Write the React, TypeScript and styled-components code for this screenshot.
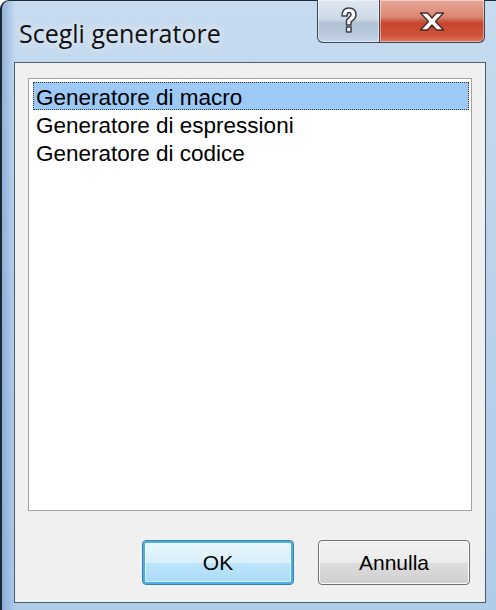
import React, { useState } from "react";
import styled, { createGlobalStyle } from "styled-components";

const GlobalStyle = createGlobalStyle`
  html, body {
    margin: 0;
    padding: 0;
    overflow: hidden;
  }
`;

const Window = styled.div`
  box-sizing: border-box;
  width: 496px;
  height: 610px;
  display: flex;
  flex-direction: column;
  padding: 0 10px 7px 12px;
  border-left: 2px solid #1e2834;
  border-top: 1px solid #1e2834;
  border-top-left-radius: 9px;
  background:
    linear-gradient(to right, rgba(110, 150, 205, 0.6) 0, rgba(120, 160, 210, 0) 13px),
    linear-gradient(to bottom, #c6dbef 0%, #bcd3eb 40%, #aecbea 100%);
`;

const TitleBar = styled.div`
  height: 61px;
  display: flex;
  align-items: flex-start;
  justify-content: space-between;
`;

const Title = styled.div`
  font-family: "Open Sans", "Liberation Sans", sans-serif;
  font-size: 25px;
  color: #101010;
  margin: 15px 0 0 5px;
  text-shadow: 0 0 10px rgba(255, 255, 255, 0.9);
`;

const Controls = styled.div`
  display: flex;
  margin-top: -1px;
  margin-right: 1px;
`;

const CaptionButton = styled.div<{ $kind: "help" | "close" }>`
  box-sizing: border-box;
  height: 43px;
  width: ${(p) => (p.$kind === "close" ? "105px" : "63px")};
  display: flex;
  align-items: center;
  justify-content: center;
  border: 1px solid #3c4654;
  border-top: none;
  border-left: ${(p) => (p.$kind === "close" ? "none" : "1px solid #3c4654")};
  border-radius: ${(p) => (p.$kind === "close" ? "0 0 6px 0" : "0 0 0 6px")};
  box-shadow: inset 0 0 0 1px rgba(255, 255, 255, 0.45);
  background: ${(p) =>
    p.$kind === "close"
      ? "linear-gradient(to bottom, #e8a798 0%, #d98873 40%, #c8432b 55%, #cf543b 85%, #e07a5e 100%)"
      : "linear-gradient(to bottom, #dfe7f1 0%, #cdd9e6 45%, #b2c3d6 55%, #bacbdf 85%, #c8d7e8 100%)"};
`;

const Client = styled.div`
  flex: 1;
  display: flex;
  flex-direction: column;
  background: #f0f0f0;
  border: 1px solid #4e5a68;
  padding: 15px 13px 17px 13px;
`;

const ListBox = styled.div`
  box-sizing: border-box;
  height: 433px;
  background: #ffffff;
  border: 1px solid #a3a3a3;
  padding: 3px 2px 2px 4px;
`;

const Item = styled.div<{ $selected?: boolean }>`
  box-sizing: border-box;
  height: 28px;
  line-height: 22px;
  padding: 4px 0 0 2px;
  font-family: "Liberation Sans", Arial, sans-serif;
  font-size: 22.5px;
  color: #000;
  white-space: nowrap;
  border: 1px dotted ${(p) => (p.$selected ? "#3a3a3a" : "transparent")};
  background: ${(p) => (p.$selected ? "#9dc9f6" : "transparent")};
  cursor: default;
`;

const ButtonRow = styled.div`
  display: flex;
  justify-content: flex-end;
  gap: 24px;
  margin-top: 29px;
  padding-right: 2px;
`;

const Button = styled.button<{ $default?: boolean }>`
  box-sizing: border-box;
  width: 152px;
  height: 45px;
  font-family: "Liberation Sans", Arial, sans-serif;
  font-size: 21px;
  color: #000;
  border-radius: 4px;
  border: 1px solid ${(p) => (p.$default ? "#3c7fb1" : "#707070")};
  box-shadow: ${(p) =>
    p.$default
      ? "inset 0 0 0 2px #48b0e0, inset 0 0 0 3px rgba(255,255,255,0.5)"
      : "inset 0 0 0 1px rgba(255,255,255,0.9)"};
  background: ${(p) =>
    p.$default
      ? "linear-gradient(to bottom, #eaf6fd 0%, #d9f0fc 50%, #bee6fd 51%, #a7d9f5 100%)"
      : "linear-gradient(to bottom, #f2f2f2 0%, #ebebeb 50%, #dddddd 51%, #cfcfcf 100%)"};
  padding: 0;
`;

const HelpGlyph = () => (
  <svg width="18" height="28" viewBox="0 0 18 28">
    <path
      d="M2 9 C2 3 5 1 9 1 C13 1 16 3 16 8 C16 12 13 13 11 15 L11 18 L6.5 18 L6.5 14 C6.5 11 11 10 11 8 C11 6 10 5.5 9 5.5 C8 5.5 7 6 7 9 Z M6.5 20 L11 20 L11 25 L6.5 25 Z"
      fill="#ffffff"
      stroke="#3a3f48"
      strokeWidth="1.5"
      strokeLinejoin="round"
    />
  </svg>
);

const CloseGlyph = () => (
  <svg width="26" height="19" viewBox="0 0 26 19">
    <path
      d="M1.5 1 L8.5 1 L13 6 L17.5 1 L24.5 1 L16.5 9.5 L24.5 18 L17.5 18 L13 13 L8.5 18 L1.5 18 L9.5 9.5 Z"
      fill="#ffffff"
      stroke="#4a2a25"
      strokeWidth="1.4"
      strokeLinejoin="round"
    />
  </svg>
);

const items = ["Generatore di macro", "Generatore di espressioni", "Generatore di codice"];

export default function App() {
  const [selected, setSelected] = useState(0);

  return (
    <>
      <GlobalStyle />
      <Window>
        <TitleBar>
          <Title>Scegli generatore</Title>
          <Controls>
            <CaptionButton $kind="help">
              <HelpGlyph />
            </CaptionButton>
            <CaptionButton $kind="close">
              <CloseGlyph />
            </CaptionButton>
          </Controls>
        </TitleBar>
        <Client>
          <ListBox>
            {items.map((label, i) => (
              <Item key={label} $selected={i === selected} onClick={() => setSelected(i)}>
                {label}
              </Item>
            ))}
          </ListBox>
          <ButtonRow>
            <Button $default>OK</Button>
            <Button>Annulla</Button>
          </ButtonRow>
        </Client>
      </Window>
    </>
  );
}
